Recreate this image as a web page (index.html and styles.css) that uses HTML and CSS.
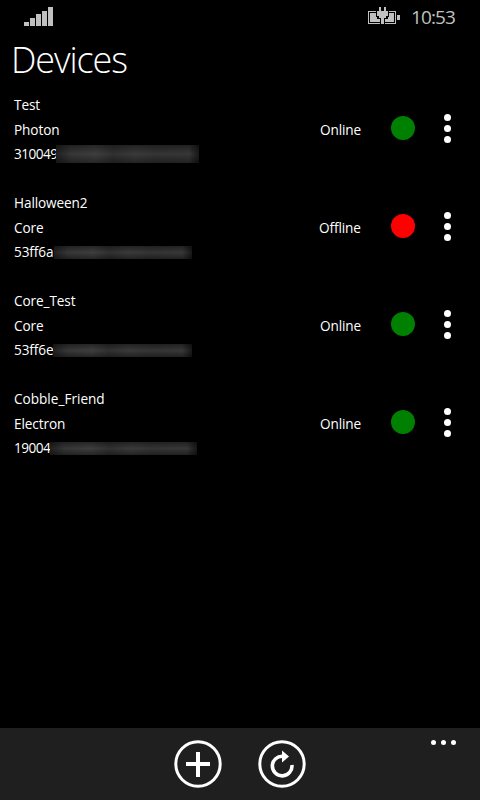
FILE: index.html
```html
<!DOCTYPE html>
<html lang="en">
<head>
<meta charset="utf-8">
<title>Devices</title>
<link rel="stylesheet" href="styles.css">
</head>
<body>
<header class="status">
  <svg class="signal" width="29" height="19" viewBox="0 0 29 19" fill="#c0c0c0" shape-rendering="crispEdges"><path d="M0 15h5v4H0zM6 11h5v8H6zM12 7h5v12h-5zM18 4h5v15h-5zM24 0h5v19h-5z"/></svg>
  <svg class="battery" width="32" height="18" viewBox="0 0 32 18" fill="#c0c0c0" shape-rendering="crispEdges"><path d="M0 4h8v1H1v11h11v1H0zM21 4h7v13H17v-1h10V5h-6zM2 6h6v4h1v2h3v3H2zM21 6h5v9h-9v-3h3v-2h1zM29 8h3v5h-3z"/><path d="M11 0h2v4h3V0h2v4h2v5h-2v2h-2v6h-3v-6h-2V9H9V4h2z"/></svg>
  <span class="clock">10:53</span>
</header>
<main>
  <h1>Devices</h1>
  <ul class="devices">
    <li class="device">
      <div class="info"><span>Test</span><span class="kind">Photon</span><span class="id"><span class="prefix p1">310049</span><i class="mask m1"></i></span></div>
      <span class="state">Online</span><span class="dot"></span>
      <span class="more"><i></i><i></i><i></i></span>
    </li>
    <li class="device">
      <div class="info"><span>Halloween2</span><span class="kind">Core</span><span class="id"><span class="prefix p2">53ff6a</span><i class="mask m2"></i></span></div>
      <span class="state off">Offline</span><span class="dot red"></span>
      <span class="more"><i></i><i></i><i></i></span>
    </li>
    <li class="device">
      <div class="info"><span>Core_Test</span><span class="kind">Core</span><span class="id"><span class="prefix p3">53ff6e</span><i class="mask m3"></i></span></div>
      <span class="state">Online</span><span class="dot"></span>
      <span class="more"><i></i><i></i><i></i></span>
    </li>
    <li class="device">
      <div class="info"><span class="wide">Cobble_Friend</span><span class="kind">Electron</span><span class="id"><span class="prefix p4">19004</span><i class="mask m4"></i></span></div>
      <span class="state">Online</span><span class="dot"></span>
      <span class="more"><i></i><i></i><i></i></span>
    </li>
  </ul>
</main>
<footer class="appbar">
  <svg width="48" height="48" viewBox="0 0 48 48"><circle cx="24" cy="24" r="22.2" fill="none" stroke="#fff" stroke-width="3"/><path d="M22 12h4v10h10v4H26v11h-4V26H12v-4h10z" fill="#fff"/></svg>
  <svg width="48" height="48" viewBox="0 0 48 48"><circle cx="24" cy="24" r="22.2" fill="none" stroke="#fff" stroke-width="3"/><path d="M25 16.3A9.8 9.8 0 1 0 33.9 25" fill="none" stroke="#fff" stroke-width="3.6"/><path d="M24 10.5l7 6-7 6z" fill="#fff"/></svg>
  <span class="ellipsis"><i></i><i></i><i></i></span>
</footer>
</body>
</html>
```
FILE: styles.css
```css
* { box-sizing: border-box; }
body {
  margin: 0;
  width: 480px;
  height: 800px;
  display: flex;
  flex-direction: column;
  overflow: hidden;
  background: #000;
  color: #fff;
  font-family: "Open Sans", "Noto Sans", sans-serif;
}
.status {
  height: 32px;
  padding: 7px 24px 0;
  display: flex;
  align-items: flex-start;
}
.battery { margin-left: auto; }
.clock {
  width: 45px;
  margin-left: 11px;
  color: #c0c0c0;
  font-size: 19px;
  line-height: 21px;
  letter-spacing: -0.9px;
  white-space: nowrap;
}
main { flex: 1; }
h1 {
  margin: 0;
  height: 61px;
  padding-left: 11px;
  font-size: 36px;
  font-weight: 300;
  line-height: 56px;
  letter-spacing: -1.1px;
}
.devices { margin: 0; padding: 0; list-style: none; }
.device {
  height: 98px;
  padding-left: 14px;
  display: flex;
  align-items: flex-start;
  font-size: 13.6px;
  letter-spacing: -0.1px;
}
.info {
  width: 305px;
  display: flex;
  flex-direction: column;
  line-height: 24px;
  white-space: nowrap;
}
.wide { letter-spacing: 0; }
.kind { margin-top: 1px; }
.id { display: flex; align-items: center; height: 24px; }
.prefix { letter-spacing: -0.5px; }
.p1 { width: 42px; }
.p2 { width: 40px; letter-spacing: -0.1px; }
.p3 { width: 39px; letter-spacing: -0.1px; }
.p4 { width: 36px; }
.mask {
  position: relative;
  height: 13px;
  background: linear-gradient(rgba(0, 0, 0, .4), transparent 50%, rgba(0, 0, 0, .4)),
    linear-gradient(90deg, #202020, #363636 10%, #3e3e3e 28%, #303030 40%, #3a3a3a 55%, #343434 70%, #373737 93%, #181818);
}
.m1 { width: 143px; height: 18px; }
.m2 { width: 138px; }
.m3 { width: 139px; }
.m4 { width: 147px; }
.state {
  width: 72px;
  padding-top: 25px;
  padding-left: 1px;
  line-height: 24px;
}
.off { padding-left: 0; }
.dot {
  width: 24px;
  height: 24px;
  margin-top: 23px;
  border-radius: 50%;
  background: #008000;
}
.red { background: #f00; }
.more {
  display: flex;
  flex-direction: column;
  gap: 4px;
  margin: 21px 0 0 29px;
}
.more i { width: 7px; height: 7px; border-radius: 50%; background: #fff; }
.appbar {
  height: 72px;
  padding: 12px 24px 0 174px;
  display: flex;
  gap: 36px;
  background: #1f1f1f;
}
.ellipsis { display: flex; gap: 5px; margin-left: auto; }
.ellipsis i { width: 5px; height: 5px; border-radius: 50%; background: #fff; }
```
